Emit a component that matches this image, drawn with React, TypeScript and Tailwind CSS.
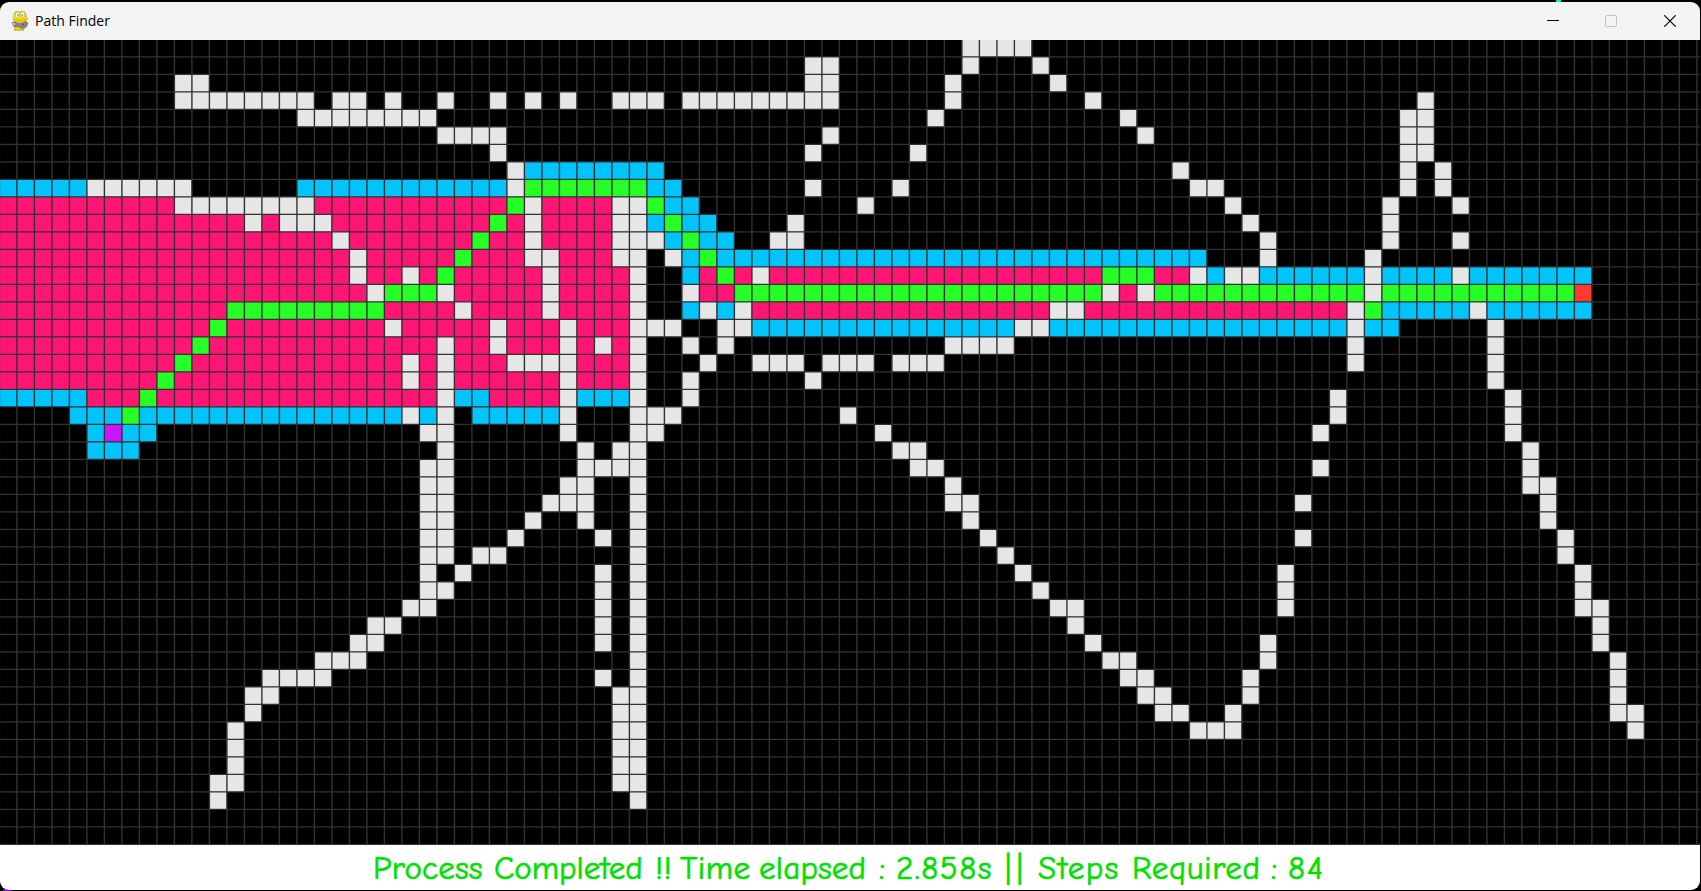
import React from "react";

const CELL = 17.5;
const COLS = 98;
const ROWS = 46;
const OFFSET = -0.6;

const COLORS: Record<string, string> = {
  W: "#e6e6e6",
  B: "#00c4fa",
  P: "#ff1573",
  G: "#26ff26",
  R: "#ff3b30",
  V: "#cc14ff",
};

// One entry per board row: cell kind followed by its first and last column.
const BOARD: string[] = [
  "W55-58",
  "W46-47 W55 W59",
  "W10-11 W46-47 W54 W60",
  "W10-17 W19-20 W22 W25 W28 W30 W32 W35-37 W39-47 W54 W62 W81",
  "W17-24 W53 W64 W80-81",
  "W25-28 W47 W65 W80-81",
  "W28 W46 W52 W80-81",
  "W29 B30-37 W67 W80 W82",
  "B0-4 W5-10 B17-28 W29 G30-36 B37-38 W46 W51 W68-69 W80 W82",
  "P0-9 W10-17 P18-28 G29 W30 P31-34 W35-36 G37 B38-39 W49 W70 W79 W83",
  "P0-13 W14 P15 W16-18 P19-27 G28 P29 W30 P31-34 W35-36 B37 G38 B39-40 W45 W71 W79",
  "P0-18 W19 P20-26 G27 P28-29 W30 P31-34 W35-37 B38 G39 B40-41 W44-45 W72 W79 W83",
  "P0-19 W20 P21-25 G26 P27-29 W30-31 P32-34 W35-36 W38 B39 G40 B41-68 W72 W78",
  "P0-19 W20 P21-22 W23 P24 G25 P26-30 W31 P32-35 W36 B39 P40 G41 P42 W43 P44-62 G63-65 P66-67 W68 B69 W70-71 B72-77 W78 B79-82 W83 B84-90",
  "P0-20 W21 G22-24 W25 P26-30 W31 P32-35 W36 W39 P40-41 G42-62 W63 P64 W65 G66-77 W78 G79-89 R90",
  "P0-12 G13-21 P22-25 W26 P27-30 W31 P32-35 W36 B39 W40 B41 W42 P43-59 W60-61 P62-76 W77 G78 B79-83 W84 B85-90",
  "P0-11 G12 P13-21 W22 P23-27 W28 P29-31 W32 P33-35 W36-38 W41-42 B43-57 W58-59 B60-76 W77 B78-79 W85",
  "P0-10 G11 P12-24 W25 P26-27 W28 P29-31 W32 P33 W34 P35 W36 W39 W41 W54-57 W77 W85",
  "P0-9 G10 P11-22 W23 P24 W25 P26-28 W29-32 P33-35 W36 W40 W43-45 W47-49 W51-53 W77 W85",
  "P0-8 G9 P10-22 W23 P24 W25 P26-31 W32 P33-35 W36 W39 W46 W85",
  "B0-4 P5-7 G8 P9-24 W25 B26-27 P28-31 W32 B33-35 W36 W39 W76 W86",
  "B4-6 G7 B8-22 W23 B24 W25 B27-31 W32 W36-38 W48 W76 W86",
  "B5 V6 B7-8 W24-25 W32 W36-37 W50 W75 W86",
  "B5-7 W25 W33 W35-36 W51-52 W87",
  "W24-25 W33-36 W52-53 W75 W87",
  "W24-25 W32-33 W36 W54 W87-88",
  "W24-25 W31-33 W36 W54-55 W74 W88",
  "W24-25 W30 W33 W36 W55 W88",
  "W24-25 W29 W34 W36 W56 W74 W89",
  "W24-25 W27-28 W36 W57 W89",
  "W24 W26 W34 W36 W58 W73 W90",
  "W24-25 W34 W36 W59 W73 W90",
  "W23-24 W34 W36 W60-61 W73 W90-91",
  "W21-22 W34 W36 W61 W91",
  "W20-21 W34 W36 W62 W72 W91",
  "W18-20 W36 W63-64 W72 W92",
  "W15-18 W34 W36 W64-65 W71 W92",
  "W14-15 W35-36 W65-66 W71 W92",
  "W14 W35-36 W66-67 W70 W92-93",
  "W13 W35-36 W68-70 W93",
  "W13 W35-36",
  "W13 W35-36",
  "W12-13 W35-36",
  "W12 W36",
];

function Board() {
  const runs = BOARD.flatMap((row, y) =>
    row.split(" ").map((run) => {
      const [a, b] = run.slice(1).split("-").map(Number);
      return { kind: run[0], x: a, y, n: (b ?? a) - a + 1 };
    }),
  );
  let lines = "";
  for (let i = 0; i <= COLS; i++) lines += `M${i * CELL + OFFSET} 0V805`;
  for (let j = 0; j <= ROWS; j++) lines += `M0 ${j * CELL + OFFSET}H1701`;
  return (
    <svg className="block h-[805px] w-[1701px] shrink-0 bg-black" viewBox="0 0 1701 805">
      {runs.map((r) => (
        <rect
          key={`${r.x}-${r.y}`}
          x={r.x * CELL + OFFSET}
          y={r.y * CELL + OFFSET}
          width={r.n * CELL}
          height={CELL}
          fill={COLORS[r.kind]}
        />
      ))}
      <path d={lines} stroke="#323232" strokeWidth={1.4} fill="none" />
    </svg>
  );
}

function SnakeIcon() {
  return (
    <svg className="h-[22px] w-[19px]" viewBox="0 0 19 22">
      <path d="M4.500 14.500C4 17 3.500 18 3.500 20.300H12.500C14 18.500 13 16.500 11.500 15Z" fill="#ecd016" stroke="#8a780e" strokeWidth=".5" />
      <path d="M1 12.500L4 11.500L7 13.500L11 13L14.500 11L17 13L15.500 17L11 18.500L7 16.500L2.500 16.500Z" fill="#85848a" stroke="#5a5a5e" strokeWidth=".5" />
      <path d="M1.500 13H4V15H2Z" fill="#c9c9cd" />
      <path d="M10.500 14.500L13 14L13.500 16Z" fill="#b93a3a" />
      <path d="M3.500 2.500Q5.500 .5 8 2Q11.500 .2 14.300 2.200L15.300 6.500Q17.500 8.500 15.500 10.500Q12 12.800 8 12.500Q3.500 12.500 2 9.500Q2 7.500 3.200 6Z" fill="#f4dc14" stroke="#a8920f" strokeWidth=".5" />
      <ellipse cx="6.200" cy="4.700" rx="2" ry="2.700" fill="#f8f8ee" stroke="#a39327" strokeWidth=".4" />
      <ellipse cx="11.700" cy="4.500" rx="2.100" ry="2.700" fill="#f8f8ee" stroke="#a39327" strokeWidth=".4" />
      <circle cx="7" cy="5" r=".7" fill="#555" />
      <circle cx="11.400" cy="5" r=".7" fill="#555" />
      <path d="M3.500 9.800Q9 11.700 14.500 9.200" fill="none" stroke="#b59e10" strokeWidth=".6" />
    </svg>
  );
}

function TitleBar() {
  return (
    <header className="flex h-[38px] shrink-0 items-center bg-[#f2f3f3] pl-[11px] text-black">
      <SnakeIcon />
      <h1 className="ml-[5px] font-['Open_Sans','Noto_Sans',sans-serif] text-[14px] leading-none">Path Finder</h1>
      <div className="ml-auto flex items-center">
        <button aria-label="Minimize" className="flex h-[38px] w-[58px] items-center justify-center">
          <svg className="h-3 w-3" viewBox="0 0 12 12" shapeRendering="crispEdges">
            <path d="M0 5h12v1H0z" />
          </svg>
        </button>
        <button aria-label="Maximize" className="flex h-[38px] w-[58px] items-center justify-center" disabled>
          <svg className="h-3 w-3" viewBox="0 0 12 12" fill="none" stroke="#c0c2c2">
            <rect x=".5" y=".5" width="11" height="11" rx="1" />
          </svg>
        </button>
        <button aria-label="Close" className="flex h-[38px] w-[60px] items-center justify-center">
          <svg className="h-3 w-3" viewBox="0 0 12 12" fill="none" stroke="#000" strokeWidth="1.150">
            <path d="M.3.300L11.700 11.700M11.700.3L.3 11.700" />
          </svg>
        </button>
      </div>
    </header>
  );
}

const STATUS: { word: string; className: string }[] = [
  { word: "Process ", className: "w-[121px] tracking-[0.2px]" },
  { word: "Completed ", className: "w-[161px] tracking-[0px]" },
  { word: "!! ", className: "w-[25px] tracking-[0.5px]" },
  { word: "Time ", className: "w-[79px] tracking-[0.5px]" },
  { word: "elapsed ", className: "w-[120px] tracking-[0.2px]" },
  { word: ": ", className: "w-[17px]" },
  { word: "2.858s ", className: "w-[109px] tracking-[1.5px]" },
  { word: "|| ", className: "w-[33px] tracking-[5px]" },
  { word: "Steps ", className: "w-[94px] tracking-[1.5px]" },
  { word: "Required ", className: "w-[139px] tracking-[0.6px]" },
  { word: ": ", className: "w-[17px]" },
  { word: "84", className: "w-[37px] tracking-[2px]" },
];

export default function App() {
  return (
    <div className="relative h-[891px] w-[1701px] overflow-hidden bg-black pt-[2px]">
      <span className="absolute top-0 left-[1556px] h-[2px] w-[5px] bg-[#00f0d8]" />
      <span className="absolute bottom-0 left-[3px] h-[2px] w-[9px] bg-[#8a00e6]" />
      <main className="relative flex h-[888px] w-[1700px] flex-col overflow-hidden rounded-[9px]">
        <TitleBar />
        <Board />
        <footer className="flex h-[45px] shrink-0 items-center bg-white pt-[2px] pl-[373px]">
          <p className="flex font-['Comic_Sans_MS','Comic_Neue','Noto_Sans',sans-serif] text-[33px] leading-none whitespace-nowrap text-[#00e000] [-webkit-text-stroke:0.7px_#00e000]">
            {STATUS.map(({ word, className }, i) => (
              <span key={i} className={className}>
                {word}
              </span>
            ))}
          </p>
        </footer>
      </main>
    </div>
  );
}
